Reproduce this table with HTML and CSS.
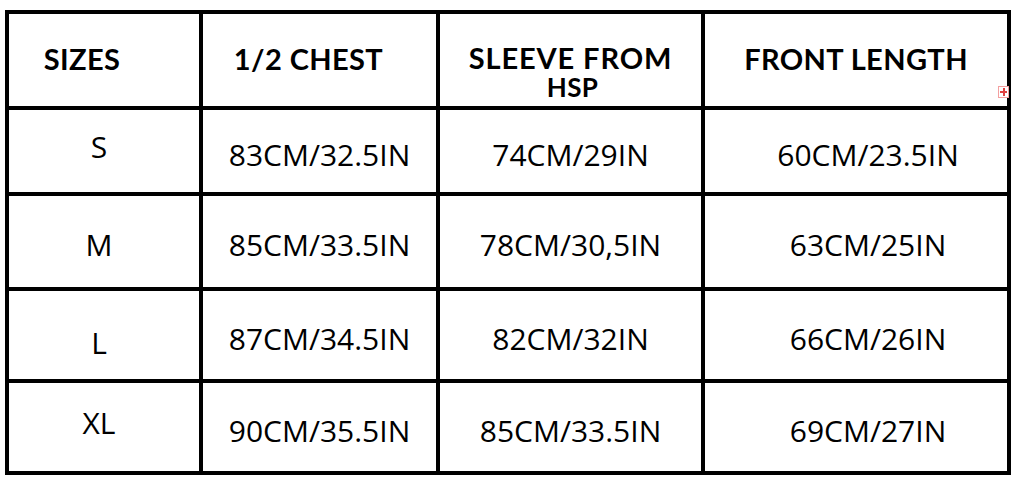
FILE: index.html
```html
<!DOCTYPE html>
<html>
<head>
<meta charset="utf-8">
<link rel="stylesheet" href="styles.css">
</head>
<body>
<div class="chart">
  <div class="cell head c1">SIZES</div>
  <div class="cell head c2">1/2 CHEST</div>
  <div class="cell head c3"><span class="l1">SLEEVE FROM</span><span class="l2">HSP</span></div>
  <div class="cell head c4">FRONT LENGTH<span class="mark"></span></div>

  <div class="cell size up">S</div>
  <div class="cell val">83CM/32.5IN</div>
  <div class="cell val">74CM/29IN</div>
  <div class="cell val shift">60CM/23.5IN</div>

  <div class="cell size mid">M</div>
  <div class="cell val">85CM/33.5IN</div>
  <div class="cell val">78CM/30,5IN</div>
  <div class="cell val shift">63CM/25IN</div>

  <div class="cell size down">L</div>
  <div class="cell val">87CM/34.5IN</div>
  <div class="cell val">82CM/32IN</div>
  <div class="cell val shift">66CM/26IN</div>

  <div class="cell size up">XL</div>
  <div class="cell val">90CM/35.5IN</div>
  <div class="cell val">85CM/33.5IN</div>
  <div class="cell val shift">69CM/27IN</div>
</div>
</body>
</html>
```
FILE: styles.css
```css
html, body {
  margin: 0;
  padding: 0;
  background: #fff;
}
body {
  padding: 10px 0 0 5px;
}
.chart {
  display: grid;
  grid-template-columns: 190px 233px 261px 302px;
  grid-template-rows: 92px 82px 91px 88px 88px;
  gap: 4px;
  padding: 4px;
  width: max-content;
  background: #000;
}
.cell {
  background: #fff;
  display: flex;
  align-items: center;
  justify-content: center;
  color: #000;
  position: relative;
}
.head {
  font-family: "Lato", "Noto Sans", sans-serif;
  font-weight: 700;
  font-size: 29px;
  letter-spacing: 0.4px;
  padding-bottom: 4px;
}
.c1 { padding-right: 44px; }
.c2 { padding-right: 22px; }
.c3 {
  flex-direction: column;
  padding-top: 24px;
  padding-bottom: 0;
}
.l1 {
  display: block;
  line-height: 30px;
  letter-spacing: 0.9px;
}
.l2 {
  display: block;
  font-size: 26px;
  line-height: 28px;
  margin-left: 4px;
}
.mark {
  position: absolute;
  right: -2px;
  top: 72px;
  width: 9px;
  height: 10px;
  border: 1px solid #f4a0a0;
  background: #fff;
}
.mark::before, .mark::after {
  content: "";
  position: absolute;
  background: #e04040;
}
.mark::before { left: 1px; top: 4px; width: 7px; height: 2px; }
.mark::after { left: 4px; top: 1px; width: 2px; height: 8px; }
.size, .val {
  font-family: "Open Sans", "Noto Sans", sans-serif;
  font-size: 30px;
  font-weight: 400;
}
.size { padding-right: 10px; }
.val { padding-top: 6px; }
.up { padding-bottom: 10px; }
.mid { padding-top: 6px; }
.down { padding-top: 14px; }
.shift { padding-left: 24px; }
```
